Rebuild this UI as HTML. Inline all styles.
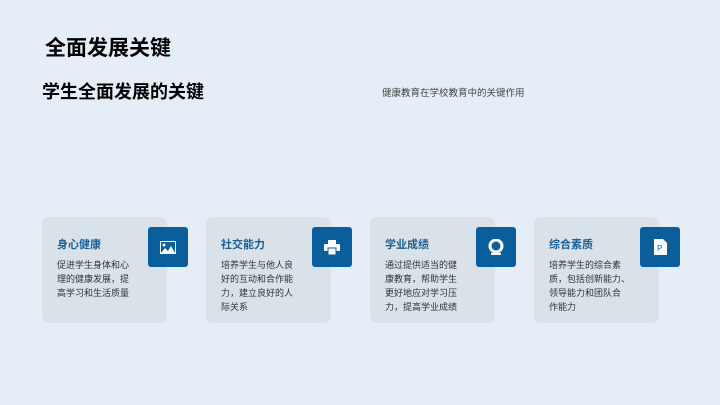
<!DOCTYPE html>
<html><head><meta charset="utf-8"><style>
*{margin:0;padding:0;box-sizing:border-box}
body{width:720px;height:405px;overflow:hidden;background:#e5eef6;font-family:"Liberation Sans","Noto Sans CJK SC",sans-serif;position:relative}
.t1{position:absolute;left:45px;top:32px;font-size:21px;font-weight:bold;color:#000}
.t2{position:absolute;left:42px;top:78px;font-size:18px;font-weight:bold;color:#000}
.sub{position:absolute;left:382px;top:85px;font-size:9.5px;color:#444}
.card{position:absolute;top:217px;width:125px;height:106px;background:#d9e2e9;border-radius:7px}
.card h3{position:absolute;left:15px;top:19px;font-size:11px;color:#1a5f95;font-weight:bold}
.card p{position:absolute;left:15px;top:41px;width:90px;font-size:9px;line-height:14px;color:#333;white-space:nowrap}
.ic{position:absolute;left:106px;top:10px;width:40px;height:40px;background:#0b5e9c;border-radius:3px;display:flex;align-items:center;justify-content:center}
</style></head><body>
<div class="t1">全面发展关键</div>
<div class="t2">学生全面发展的关键</div>
<div class="sub">健康教育在学校教育中的关键作用</div>

<div class="card" style="left:42px"><h3>身心健康</h3><p>促进学生身体和心<br>理的健康发展，提<br>高学习和生活质量</p>
<div class="ic"><svg width="16" height="13" viewBox="0 0 16 13"><rect x="0.5" y="0.5" width="15" height="12" fill="none" stroke="#fff"/><circle cx="4" cy="4" r="1.5" fill="#fff"/><path d="M1 12 L5 7 L8 10 L11 5 L15 12Z" fill="#fff"/></svg></div></div>

<div class="card" style="left:206px"><h3>社交能力</h3><p>培养学生与他人良<br>好的互动和合作能<br>力，建立良好的人<br>际关系</p>
<div class="ic"><svg width="16" height="15" viewBox="0 0 16 15"><rect x="4" y="0" width="8" height="4" fill="#fff"/><rect x="0" y="4" width="16" height="7" rx="1" fill="#fff"/><rect x="4" y="8" width="8" height="7" fill="#fff" stroke="#0b5e9c"/></svg></div></div>

<div class="card" style="left:370px"><h3>学业成绩</h3><p>通过提供适当的健<br>康教育，帮助学生<br>更好地应对学习压<br>力，提高学业成绩</p>
<div class="ic"><svg width="16" height="17" viewBox="0 0 16 17"><circle cx="8" cy="7" r="6" fill="none" stroke="#fff" stroke-width="3"/><rect x="3" y="14" width="10" height="2" fill="#fff"/></svg></div></div>

<div class="card" style="left:534px"><h3>综合素质</h3><p>培养学生的综合素<br>质，包括创新能力、<br>领导能力和团队合<br>作能力</p>
<div class="ic"><svg width="13" height="16" viewBox="0 0 13 16"><path d="M0 0H9L13 4V16H0Z" fill="#fff"/><text x="3" y="12" font-size="8" fill="#0b5e9c" font-family="Liberation Sans">P</text></svg></div></div>
</body></html>
